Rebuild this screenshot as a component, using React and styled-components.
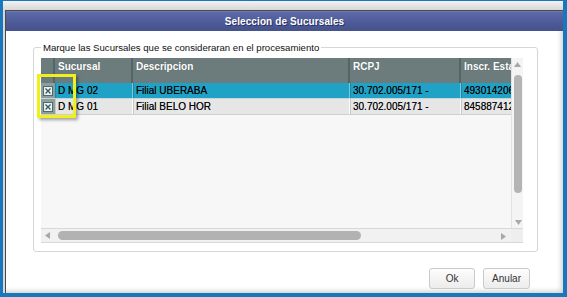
import React from 'react'
import styled, {createGlobalStyle} from 'styled-components'

const GlobalStyle = createGlobalStyle`
    html, body {
        margin: 0;
        padding: 0;
        overflow: hidden;
    }
    body {
        font-family: "Liberation Sans", Arial, sans-serif;
    }
`

const columns = [
    {key: 'check', title: '', width: 14},
    {key: 'sucursal', title: 'Sucursal', width: 78},
    {key: 'descripcion', title: 'Descripcion', width: 217},
    {key: 'rcpj', title: 'RCPJ', width: 111},
    {key: 'inscr', title: 'Inscr. Estadual', width: 70},
]

const rows = [
    {sucursal: 'D MG 02', descripcion: 'Filial UBERABA', rcpj: '30.702.005/171 -', inscr: '4930142069', selected: true},
    {sucursal: 'D MG 01', descripcion: 'Filial BELO HOR', rcpj: '30.702.005/171 -', inscr: '8458874121', selected: false},
]

const CheckIcon = () => (
    <svg width='10' height='10' viewBox='0 0 10 10'>
        <rect x='0.5' y='0.5' width='9' height='9' fill='#dfe9e9' stroke='#4d6b6b'/>
        <rect x='1.5' y='1.5' width='7' height='7' fill='#f4f8f8'/>
        <path d='M2.5 2.5 L7.5 7.5 M7.5 2.5 L2.5 7.5' stroke='#3c5858' strokeWidth='1.4'/>
    </svg>
)

const Arrow = ({dir}) => {
    const d = {
        up: 'M0 5 L3.5 0 L7 5 Z',
        down: 'M0 0 L7 0 L3.5 5 Z',
        left: 'M5 0 L5 7 L0 3.5 Z',
        right: 'M0 0 L5 3.5 L0 7 Z',
    }[dir]
    const vertical = dir === 'up' || dir === 'down'
    return (
        <svg width={vertical ? 7 : 5} height={vertical ? 5 : 7} viewBox={vertical ? '0 0 7 5' : '0 0 5 7'}>
            <path d={d} fill='#a8a8a8'/>
        </svg>
    )
}

const App = () => {
    return (
        <>
            <GlobalStyle/>
            <Screen>
                <Window>
                    <Dialog>
                        <TitleBar>Seleccion de Sucursales</TitleBar>
                        <Body>
                            <Group>
                                <Legend>Marque las Sucursales que se consideraran en el procesamiento</Legend>
                                <Grid>
                                    <Viewport>
                                        <HeaderRow>
                                            {columns.map(c => (
                                                <HeaderCell key={c.key} width={c.width}>{c.title}</HeaderCell>
                                            ))}
                                        </HeaderRow>
                                        {rows.map(r => (
                                            <Row key={r.sucursal} selected={r.selected}>
                                                <CheckCell width={columns[0].width}><CheckIcon/></CheckCell>
                                                {columns.slice(1).map(c => (
                                                    <Cell key={c.key} width={c.width} selected={r.selected}>{r[c.key]}</Cell>
                                                ))}
                                            </Row>
                                        ))}
                                    </Viewport>
                                    <VScroll>
                                        <ArrowBox><Arrow dir='up'/></ArrowBox>
                                        <VThumb/>
                                        <ArrowBox><Arrow dir='down'/></ArrowBox>
                                    </VScroll>
                                    <HScroll>
                                        <ArrowBox><Arrow dir='left'/></ArrowBox>
                                        <HThumb/>
                                        <ArrowBox><Arrow dir='right'/></ArrowBox>
                                    </HScroll>
                                    <Corner/>
                                    <Highlight/>
                                </Grid>
                            </Group>
                            <Buttons>
                                <Button>Ok</Button>
                                <Button>Anular</Button>
                            </Buttons>
                        </Body>
                    </Dialog>
                </Window>
            </Screen>
        </>
    )
}

export default App


const Screen = styled.div`
    width: 567px;
    height: 297px;
    box-sizing: border-box;
    background: #1878bd;
    padding: 1px 4px 4px 3px;
    display: flex;
`

const Window = styled.div`
    flex: 1;
    display: flex;
    background: linear-gradient(#f2f2f2, #d8d8d8 9px);
    padding: 9px 0 0 2px;
`

const Dialog = styled.div`
    flex: 1;
    display: flex;
    flex-direction: column;
    background: #fff;
    border-top: 1px solid #4a4a4a;
    border-left: 1px solid #4a4a4a;
    box-shadow: inset -4px -4px 5px -2px rgba(0, 0, 0, 0.18);
`

const TitleBar = styled.div`
    height: 20px;
    display: flex;
    align-items: center;
    justify-content: center;
    background: linear-gradient(#5d6aa9, #4c5996 60%, #46528c);
    border-top: 1px solid #6d7ab5;
    box-sizing: border-box;
    color: #fff;
    font-weight: bold;
    font-size: 10px;
    letter-spacing: 0.1px;
    text-shadow: 1px 1px 0 #2a3160;
`

const Body = styled.div`
    flex: 1;
    display: flex;
    flex-direction: column;
    padding: 10px 25px 4px 27px;
`

const Group = styled.fieldset`
    margin: 0;
    padding: 4px 13px 8px 7px;
    border: 1px solid #d6d6d6;
    border-radius: 3px;
    min-width: 0;
`

const Legend = styled.legend`
    padding: 0 2px;
    margin-left: 0;
    font-size: 9.6px;
    line-height: 13px;
    color: #111;
`

const Grid = styled.div`
    position: relative;
    width: 482px;
    height: 185px;
    display: grid;
    grid-template-columns: 470px 12px;
    grid-template-rows: 170px 15px;
`

const Viewport = styled.div`
    overflow: hidden;
    background: #f7f7f7;
    white-space: nowrap;
`

const HeaderRow = styled.div`
    display: flex;
    height: 25px;
    background: #6c7c7c;
`

const HeaderCell = styled.div`
    flex: 0 0 ${p => p.width}px;
    box-sizing: border-box;
    padding: 3px 3px 0;
    border-right: 2px solid #566464;
    color: #fff;
    font-weight: bold;
    font-size: 10px;
    overflow: hidden;
    text-shadow: 0 0 1px rgba(0, 0, 0, 0.3);
`

const Row = styled.div`
    display: flex;
    height: 16px;
    box-sizing: border-box;
    border-bottom: 1px solid ${p => p.selected ? '#c7d6da' : '#d0d0d0'};
    background: ${p => p.selected ? '#1fa2c5' : '#e6e6e6'};
`

const Cell = styled.div`
    flex: 0 0 ${p => p.width}px;
    box-sizing: border-box;
    padding: 0 2px;
    border-right: 1px solid ${p => p.selected ? '#7fc6d9' : '#fbfbfb'};
    border-left: 1px solid ${p => p.selected ? '#178aa8' : '#c8c8c8'};
    font-size: 10px;
    line-height: 15px;
    color: #000;
    overflow: hidden;
    text-shadow: 0 0 0.4px rgba(0, 0, 0, 0.6);
`

const CheckCell = styled.div`
    flex: 0 0 ${p => p.width}px;
    display: flex;
    align-items: center;
    justify-content: center;
    background: #8e9d9d;
`

const VScroll = styled.div`
    display: flex;
    flex-direction: column;
    align-items: center;
    background: #f4f4f4;
    border-left: 1px solid #e2e2e2;
`

const HScroll = styled.div`
    display: flex;
    align-items: center;
    background: #f1f1f1;
    border-top: 1px solid #d8d8d8;
    border-bottom: 1px solid #d8d8d8;
    padding-right: 2px;
`

const Corner = styled.div`
    background: #eeeeee;
    border-top: 1px solid #d8d8d8;
    border-bottom: 1px solid #d8d8d8;
`

const ArrowBox = styled.div`
    flex: 0 0 auto;
    display: flex;
    align-items: center;
    justify-content: center;
    width: 12px;
    height: 12px;
    &:last-child {
        margin-top: auto;
        margin-left: auto;
    }
`

const VThumb = styled.div`
    width: 8px;
    height: 118px;
    margin-top: 5px;
    border-radius: 4px;
    background: #b4b4b4;
`

const HThumb = styled.div`
    width: 303px;
    height: 9px;
    margin-left: 5px;
    border-radius: 5px;
    background: #b2b2b2;
`

const Highlight = styled.div`
    position: absolute;
    left: -4px;
    top: 16px;
    width: 39px;
    height: 44px;
    box-sizing: border-box;
    border: 3px solid #f0f01e;
    box-shadow: 2px 2px 3px rgba(0, 0, 0, 0.35);
    pointer-events: none;
`

const Buttons = styled.div`
    margin-top: auto;
    display: flex;
    justify-content: flex-end;
    gap: 8px;
    padding-right: 8px;
`

const Button = styled.button`
    min-width: 46px;
    height: 21px;
    padding: 0 8px;
    border: 1px solid #cacaca;
    border-radius: 3px;
    background: linear-gradient(#fdfdfd, #ececec);
    font-family: "Liberation Sans", Arial, sans-serif;
    font-size: 10px;
    color: #333;
`
